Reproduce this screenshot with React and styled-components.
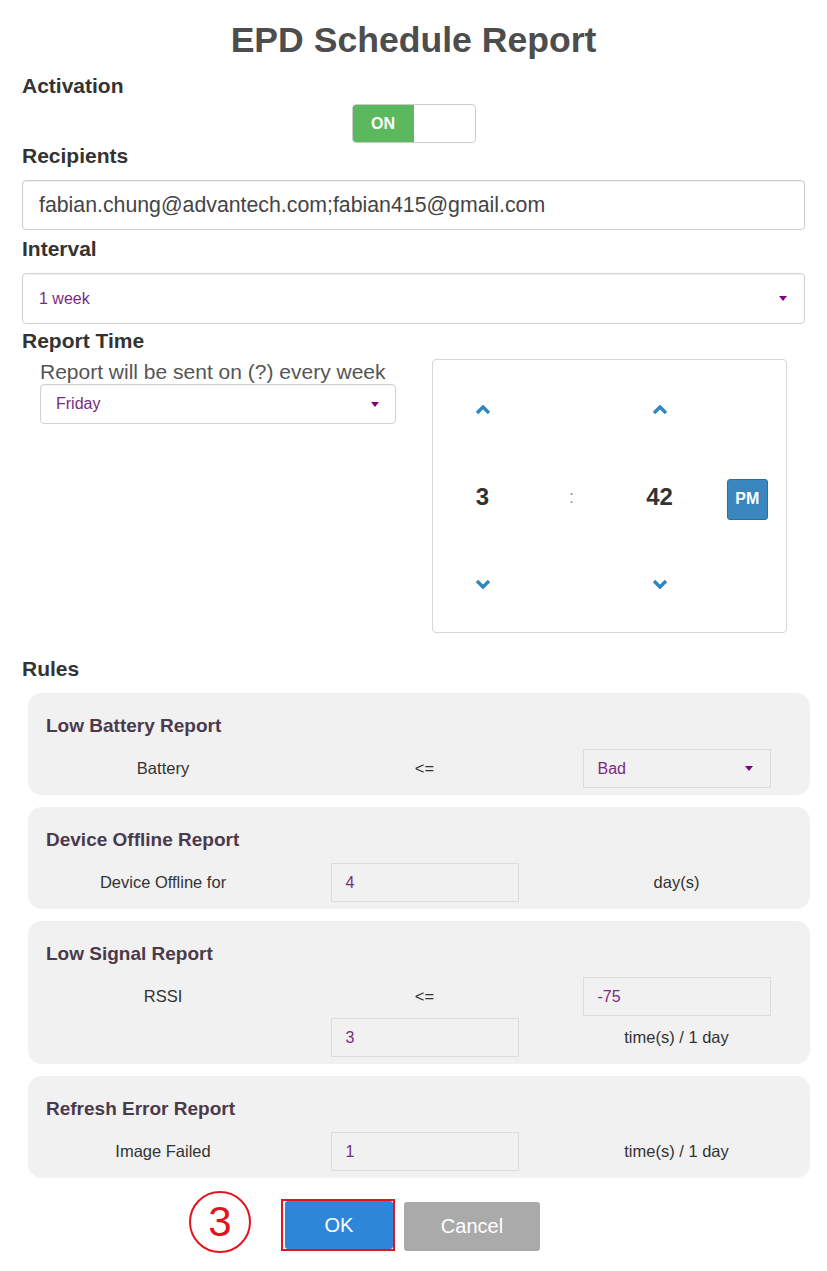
import React, { useState } from 'react';
import styled, { createGlobalStyle } from 'styled-components';

const GlobalStyle = createGlobalStyle`
	body {
		margin: 0;
		background: #fff;
		font-family: 'Liberation Sans', Arial, sans-serif;
		color: #333;
	}
`;

const Page = styled.div`
	width: 827px;
	box-sizing: border-box;
	padding: 0 22px;
`;

const Title = styled.h1`
	margin: 0;
	padding-top: 19px;
	height: 55px;
	line-height: 42px;
	font-size: 35.6px;
	font-weight: bold;
	color: #4d4d4d;
	text-align: center;
`;

const Label = styled.div`
	height: 24px;
	line-height: 24px;
	font-size: 21px;
	font-weight: bold;
	color: #333;
	margin-bottom: ${props => props.gap || 12}px;
`;

const ToggleWrap = styled.div`
	display: flex;
	justify-content: center;
	margin-bottom: 1px;
`;

const Toggle = styled.button`
	display: flex;
	width: 124px;
	height: 39px;
	padding: 0;
	border: 1px solid #ccc;
	border-radius: 4px;
	overflow: hidden;
	background: #fff;
	cursor: pointer;
`;

const ToggleOn = styled.span`
	width: 61px;
	height: 100%;
	background: ${props => (props.active ? '#5cb85c' : '#fff')};
	color: #fff;
	font-family: 'Liberation Sans', Arial, sans-serif;
	font-weight: bold;
	font-size: 16px;
	line-height: 37px;
	text-align: center;
`;

const TextInput = styled.input`
	display: block;
	width: 100%;
	box-sizing: border-box;
	height: 50px;
	margin-bottom: 7px;
	padding: 0 16px;
	border: 1px solid #ccc;
	border-radius: 4px;
	box-shadow: inset 0 1px 1px rgba(0, 0, 0, 0.06);
	font-family: 'Liberation Sans', Arial, sans-serif;
	font-size: 21.3px;
	color: #444;
	outline: none;
`;

const Select = styled.div`
	display: flex;
	align-items: center;
	justify-content: space-between;
	box-sizing: border-box;
	width: ${props => props.width || '100%'};
	height: ${props => props.height || 40}px;
	margin-bottom: ${props => props.mb || 0}px;
	padding: 0 ${props => props.padRight || 14}px 0 ${props => props.padLeft || 15}px;
	background: ${props => (props.flat ? 'transparent' : '#fff')};
	border: 1px solid ${props => (props.flat ? '#dcdcdc' : '#d2d2d2')};
	border-radius: ${props => (props.flat ? 0 : 4)}px;
	box-shadow: ${props => (props.flat ? 'none' : 'inset 0 1px 1px rgba(0, 0, 0, 0.05)')};
	font-size: 16px;
	color: #7b2a80;
`;

const Caret = styled.span`
	width: 0;
	height: 0;
	border-left: 4px solid transparent;
	border-right: 4px solid transparent;
	border-top: 5px solid #800080;
`;

const TimeRow = styled.div`
	display: grid;
	grid-template-columns: minmax(0, 1fr) minmax(0, 1fr);
	margin-bottom: 24px;
`;

const TimeCol = styled.div`
	padding: 0 18px;
`;

const SentNote = styled.div`
	height: 22px;
	line-height: 22px;
	margin: 2px 0 1px;
	font-size: 21px;
	color: #555;
	white-space: nowrap;
`;

const ClockBox = styled.div`
	box-sizing: border-box;
	height: 274px;
	padding-top: 5px;
	border: 1px solid #d6d6d6;
	border-radius: 4px;
	display: grid;
	grid-template-columns: 100px 78px 98px 1fr;
	grid-template-rows: 90px 84px 90px;
`;

const ClockCell = styled.div`
	display: flex;
	align-items: center;
	justify-content: center;
	font-size: ${props => (props.muted ? 18 : 24)}px;
	font-weight: ${props => (props.muted ? 'normal' : 'bold')};
	color: ${props => (props.muted ? '#999' : '#333')};
`;

const PmButton = styled.button`
	width: 41px;
	height: 41px;
	margin-top: 4px;
	padding: 0;
	border: 1px solid #2e6da4;
	border-radius: 3px;
	background: #3a87c0;
	color: #fff;
	font-family: 'Liberation Sans', Arial, sans-serif;
	font-weight: bold;
	font-size: 16px;
`;

const Chevron = ({ down }) => (
	<svg width="16" height="10" viewBox="0 0 16 10">
		<polyline
			points={down ? '2,2 8,8 14,2' : '2,8 8,2 14,8'}
			fill="none"
			stroke="#2f87c1"
			strokeWidth="3.4"
		/>
	</svg>
);

const RuleCard = styled.div`
	margin: 0 -5px 12px 6px;
	padding: 20px 18px 7px;
	background: #f1f1f1;
	border-radius: 14px;
`;

const RuleTitle = styled.div`
	height: 30px;
	line-height: 26px;
	margin-bottom: 6px;
	font-size: 19px;
	font-weight: bold;
	color: #4b3a4b;
`;

const RuleRow = styled.div`
	display: grid;
	grid-template-columns: 234px 289px 215px;
	height: 39px;
	align-items: center;
	justify-items: center;
	& + & {
		margin-top: 2px;
	}
`;

const RuleText = styled.span`
	font-size: 16.5px;
	color: #333;
`;

const RuleInput = styled.div`
	box-sizing: border-box;
	width: 188px;
	height: 39px;
	padding-left: 14px;
	line-height: 37px;
	border: 1px solid #dcdcdc;
	font-size: 16px;
	color: #7b2a80;
`;

const Footer = styled.div`
	display: flex;
	justify-content: center;
	margin-top: 21px;
	padding: 0 6px 21px 0;
`;

const ButtonGroup = styled.div`
	position: relative;
	display: flex;
	gap: 9px;
	align-items: flex-start;
`;

const Button = styled.button`
	width: ${props => props.width}px;
	height: ${props => props.height || 49}px;
	margin-top: ${props => props.offset || 0}px;
	border: none;
	border-radius: 3px;
	background: ${props => props.bg};
	color: #fff;
	font-family: 'Liberation Sans', Arial, sans-serif;
	font-size: 20px;
	cursor: pointer;
`;

const Highlight = styled.div`
	padding: 0 0 0 2px;
	border: 2px solid #e3141f;
	display: flex;
`;

const StepMark = styled.div`
	position: absolute;
	left: -92px;
	top: -8px;
	width: 58px;
	height: 58px;
	border: 2px solid #e3141f;
	border-radius: 50%;
	display: flex;
	align-items: center;
	justify-content: center;
	font-size: 42px;
	color: #e3141f;
	line-height: 1;
`;

const rules = [
	{ title: 'Low Battery Report', rows: [['Battery', '<=', { select: 'Bad' }]] },
	{ title: 'Device Offline Report', rows: [['Device Offline for', { input: '4' }, 'day(s)']] },
	{
		title: 'Low Signal Report',
		rows: [
			['RSSI', '<=', { input: '-75' }],
			['', { input: '3' }, 'time(s) / 1 day']
		]
	},
	{ title: 'Refresh Error Report', rows: [['Image Failed', { input: '1' }, 'time(s) / 1 day']] }
];

const renderCell = (cell, i) => {
	if (typeof cell === 'string') return <RuleText key={i}>{cell}</RuleText>;
	if (cell.select)
		return (
			<Select key={i} flat width="188px" height={39} padLeft={14} padRight={17}>
				{cell.select}
				<Caret />
			</Select>
		);
	return <RuleInput key={i}>{cell.input}</RuleInput>;
};

export default function App() {
	const [active, setActive] = useState(true);

	return (
		<Page>
			<GlobalStyle />
			<Title>EPD Schedule Report</Title>

			<Label gap={6}>Activation</Label>
			<ToggleWrap>
				<Toggle onClick={() => setActive(!active)}>
					<ToggleOn active={active}>{active ? 'ON' : ''}</ToggleOn>
				</Toggle>
			</ToggleWrap>

			<Label>Recipients</Label>
			<TextInput defaultValue="fabian.chung@advantech.com;fabian415@gmail.com" />

			<Label>Interval</Label>
			<Select height={51} mb={5} padLeft={16} padRight={17}>
				1 week
				<Caret />
			</Select>

			<Label gap={6}>Report Time</Label>
			<TimeRow>
				<TimeCol>
					<SentNote>Report will be sent on (?) every week</SentNote>
					<Select height={40} padLeft={15} padRight={16}>
						Friday
						<Caret />
					</Select>
				</TimeCol>
				<TimeCol>
					<ClockBox>
						<ClockCell><Chevron /></ClockCell>
						<ClockCell />
						<ClockCell><Chevron /></ClockCell>
						<ClockCell />
						<ClockCell>3</ClockCell>
						<ClockCell muted>:</ClockCell>
						<ClockCell>42</ClockCell>
						<ClockCell><PmButton>PM</PmButton></ClockCell>
						<ClockCell><Chevron down /></ClockCell>
						<ClockCell />
						<ClockCell><Chevron down /></ClockCell>
						<ClockCell />
					</ClockBox>
				</TimeCol>
			</TimeRow>

			<Label>Rules</Label>
			{rules.map(rule => (
				<RuleCard key={rule.title}>
					<RuleTitle>{rule.title}</RuleTitle>
					{rule.rows.map((row, r) => (
						<RuleRow key={r}>{row.map(renderCell)}</RuleRow>
					))}
				</RuleCard>
			))}

			<Footer>
				<ButtonGroup>
					<StepMark>3</StepMark>
					<Highlight>
						<Button width={108} height={48} bg="#2e86d9">OK</Button>
					</Highlight>
					<Button width={136} height={49} offset={3} bg="#aaaaaa">Cancel</Button>
				</ButtonGroup>
			</Footer>
		</Page>
	);
}
